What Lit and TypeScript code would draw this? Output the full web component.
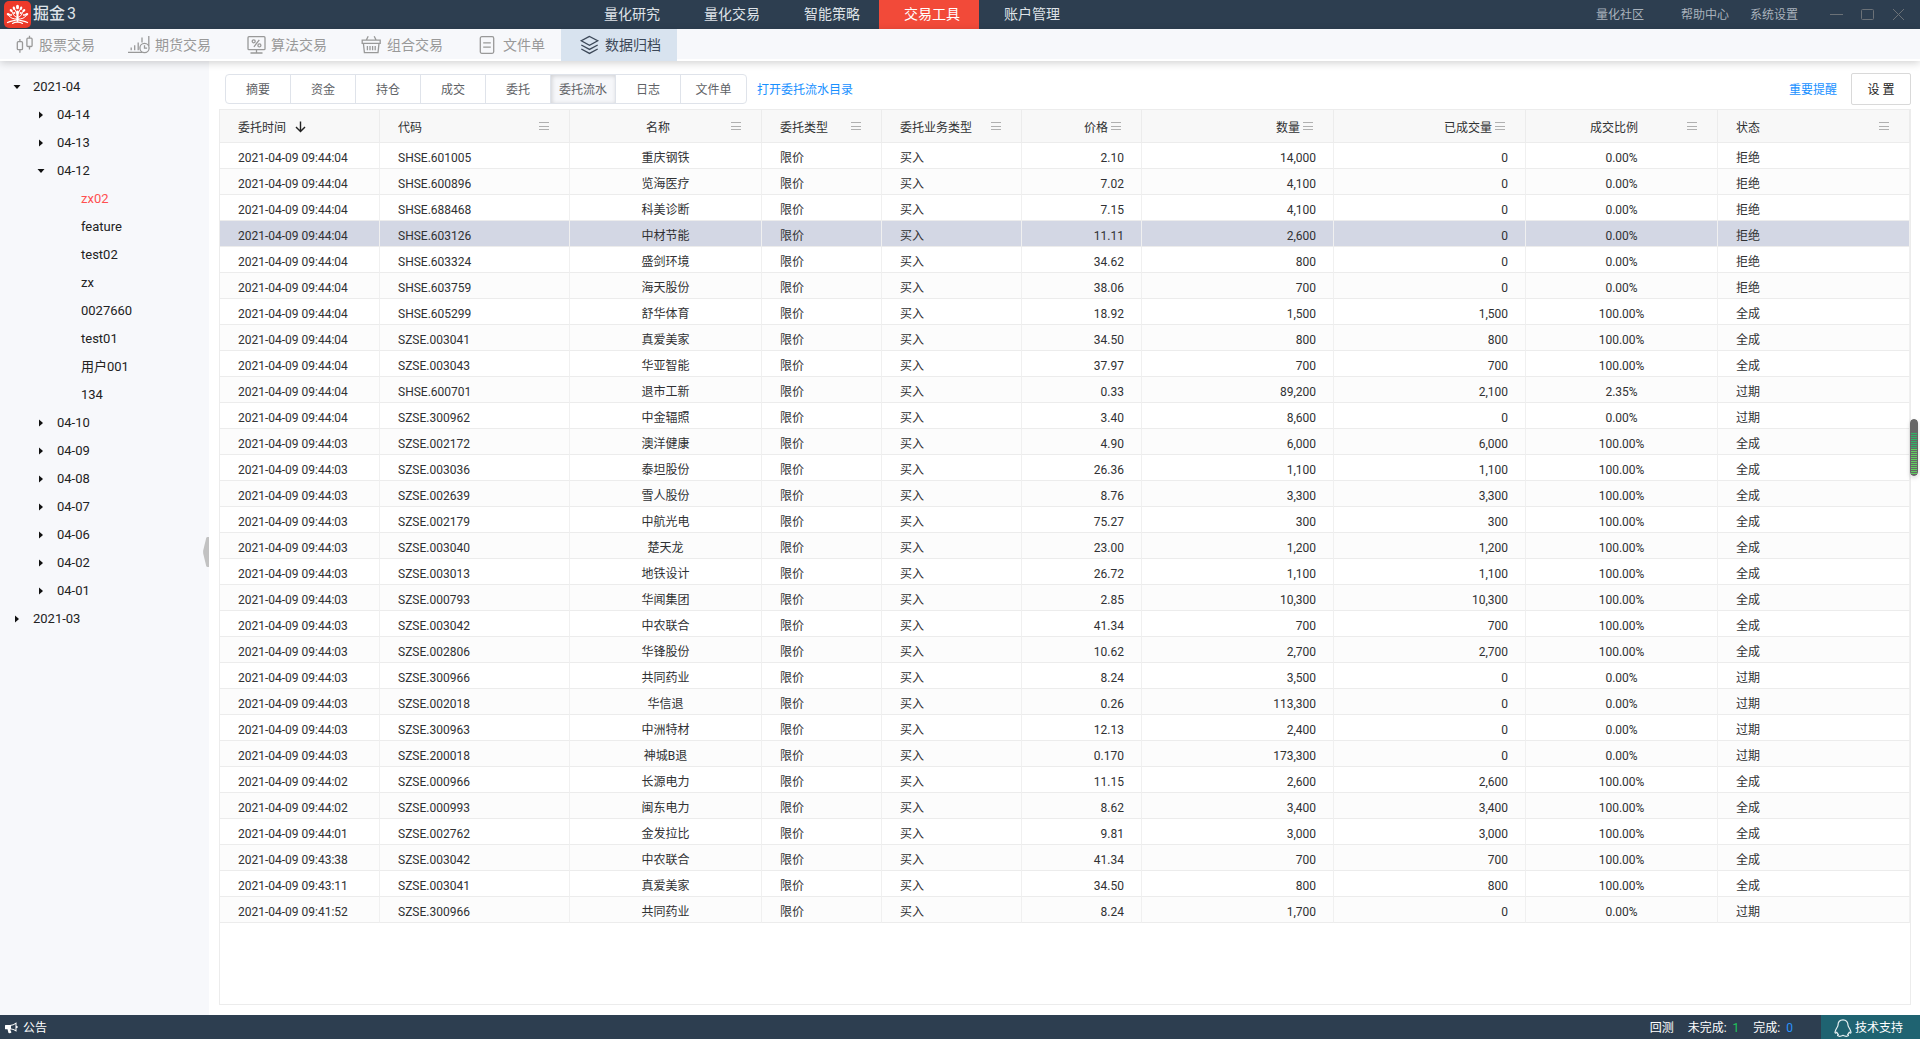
import { LitElement, html, svg, css, nothing } from "lit";
import { customElement, state } from "lit/decorators.js";
import { classMap } from "lit/directives/class-map.js";

type Align = "left" | "center" | "right";

interface Column {
  title: string;
  align: Align;
  size: string;
}

const COLUMNS: Column[] = [
  { title: "委托时间", align: "left", size: "w160" },
  { title: "代码", align: "left", size: "w190" },
  { title: "名称", align: "center", size: "" },
  { title: "委托类型", align: "left", size: "w120" },
  { title: "委托业务类型", align: "left", size: "w140" },
  { title: "价格", align: "right", size: "w120" },
  { title: "数量", align: "right", size: "" },
  { title: "已成交量", align: "right", size: "" },
  { title: "成交比例", align: "center", size: "" },
  { title: "状态", align: "left", size: "" },
];

// time | code | name | price | quantity | filled | ratio | status
const ORDERS = `
09:44:04|SHSE.601005|重庆钢铁|2.10|14,000|0|0.00%|拒绝
09:44:04|SHSE.600896|览海医疗|7.02|4,100|0|0.00%|拒绝
09:44:04|SHSE.688468|科美诊断|7.15|4,100|0|0.00%|拒绝
09:44:04|SHSE.603126|中材节能|11.11|2,600|0|0.00%|拒绝
09:44:04|SHSE.603324|盛剑环境|34.62|800|0|0.00%|拒绝
09:44:04|SHSE.603759|海天股份|38.06|700|0|0.00%|拒绝
09:44:04|SHSE.605299|舒华体育|18.92|1,500|1,500|100.00%|全成
09:44:04|SZSE.003041|真爱美家|34.50|800|800|100.00%|全成
09:44:04|SZSE.003043|华亚智能|37.97|700|700|100.00%|全成
09:44:04|SHSE.600701|退市工新|0.33|89,200|2,100|2.35%|过期
09:44:04|SZSE.300962|中金辐照|3.40|8,600|0|0.00%|过期
09:44:03|SZSE.002172|澳洋健康|4.90|6,000|6,000|100.00%|全成
09:44:03|SZSE.003036|泰坦股份|26.36|1,100|1,100|100.00%|全成
09:44:03|SZSE.002639|雪人股份|8.76|3,300|3,300|100.00%|全成
09:44:03|SZSE.002179|中航光电|75.27|300|300|100.00%|全成
09:44:03|SZSE.003040|楚天龙|23.00|1,200|1,200|100.00%|全成
09:44:03|SZSE.003013|地铁设计|26.72|1,100|1,100|100.00%|全成
09:44:03|SZSE.000793|华闻集团|2.85|10,300|10,300|100.00%|全成
09:44:03|SZSE.003042|中农联合|41.34|700|700|100.00%|全成
09:44:03|SZSE.002806|华锋股份|10.62|2,700|2,700|100.00%|全成
09:44:03|SZSE.300966|共同药业|8.24|3,500|0|0.00%|过期
09:44:03|SZSE.002018|华信退|0.26|113,300|0|0.00%|过期
09:44:03|SZSE.300963|中洲特材|12.13|2,400|0|0.00%|过期
09:44:03|SZSE.200018|神城B退|0.170|173,300|0|0.00%|过期
09:44:02|SZSE.000966|长源电力|11.15|2,600|2,600|100.00%|全成
09:44:02|SZSE.000993|闽东电力|8.62|3,400|3,400|100.00%|全成
09:44:01|SZSE.002762|金发拉比|9.81|3,000|3,000|100.00%|全成
09:43:38|SZSE.003042|中农联合|41.34|700|700|100.00%|全成
09:43:11|SZSE.003041|真爱美家|34.50|800|800|100.00%|全成
09:41:52|SZSE.300966|共同药业|8.24|1,700|0|0.00%|过期`
  .trim()
  .split("\n")
  .map((line) => {
    const [time, code, name, price, qty, filled, ratio, status] = line.split("|");
    return [`2021-04-09 ${time}`, code, name, "限价", "买入", price, qty, filled, ratio, status];
  });

interface TreeNode {
  label: string;
  open?: boolean;
  children?: TreeNode[];
  leaf?: boolean;
}

const closed = (label: string): TreeNode => ({ label });
const leaf = (label: string): TreeNode => ({ label, leaf: true });

const TREE: TreeNode[] = [
  {
    label: "2021-04",
    open: true,
    children: [
      closed("04-14"),
      closed("04-13"),
      {
        label: "04-12",
        open: true,
        children: ["zx02", "feature", "test02", "zx", "0027660", "test01", "用户001", "134"].map(leaf),
      },
      ...["04-10", "04-09", "04-08", "04-07", "04-06", "04-02", "04-01"].map(closed),
    ],
  },
  closed("2021-03"),
];

const toolIcon = (body: unknown) =>
  html`<svg class="tool-icon" width="20" height="20" viewBox="0 0 20 20" fill="none" stroke="currentColor" stroke-width="1.3" aria-hidden="true">${body}</svg>`;

const TOOLS = [
  {
    label: "股票交易",
    icon: svg`<rect x="3.3" y="6.7" width="5.2" height="8" rx="1"/><path d="M5.900 4v2.700M5.900 14.700v3"/><rect x="12.900" y="3.200" width="5.200" height="8.300" rx="1"/><path d="M15.500 .8v2.400M15.500 11.500v3"/>`,
  },
  {
    label: "期货交易",
    icon: svg`<path d="M-2 17.400h14M1.200 12.600v2.600M4.700 10.200v5M8.200 7.600v7.600M18.800 1v10"/><circle cx="14.500" cy="13" r="4.600"/><path d="M14.500 10.200v3h2.600M12 2.600v5"/>`,
  },
  {
    label: "算法交易",
    icon: svg`<rect x="2" y="1.700" width="17" height="13" rx="1"/><path d="M4.500 18h12M10.500 15v3M13.300 4.800l-5.400 7"/><circle cx="7.700" cy="6.300" r="1.500"/><circle cx="13.400" cy="10.400" r="1.500"/>`,
  },
  {
    label: "组合交易",
    icon: svg`<path d="M.2 5.200h18v3.200h-18zM1.400 8.400l1 9.200h13.600l1-9.200M4.200 5.200l2-4M14.200 5.200l-2-4M5.400 11v4.200M8 11v4.200M10.600 11v4.200M13.200 11v4.200"/>`,
  },
  {
    label: "文件单",
    icon: svg`<rect x="2.300" y="1.700" width="13.400" height="16.600" rx="1.500"/><path d="M5.200 7.800h7.600M5.200 12.200h7.600"/>`,
  },
  {
    label: "数据归档",
    icon: svg`<path d="M9.500 1.400L1.300 5.800 9.500 10.200l8.200-4.400zM1.300 10l8.200 4.400 8.200-4.400M1.300 14l8.200 4.400 8.200-4.400"/>`,
  },
];

const NAV = ["量化研究", "量化交易", "智能策略", "交易工具", "账户管理"];
const TABS = ["摘要", "资金", "持仓", "成交", "委托", "委托流水", "日志", "文件单"];

const logo = html`<svg class="logo" width="27" height="27" viewBox="0 0 27 27" aria-hidden="true">
  <rect width="27" height="27" rx="5" fill="#ee3a2a" />
  <g fill="none" stroke="#fff" stroke-linecap="round">
    <path d="M13.500 11v9" stroke-width="2" />
    <path d="M13.500 16.500C11 16 9 14 8.500 11.500M13.500 16.500C16 16 18 14 18.500 11.500M13 18C9 18.200 6.500 17 5 14.800M14 18C18 18.200 20.500 17 22 14.800M13.500 14L11.200 9M13.500 14L15.800 9" stroke-width="1" />
    <path d="M3.500 21.500C7 19.300 9.500 20.300 13.500 18.500C17.500 20.300 20 19.300 23.500 21.500M8.500 22.400C11 20.700 16 20.700 18.500 22.400" stroke-width="1.200" />
  </g>
  <g fill="#fff">
    <ellipse cx="13.500" cy="6" rx="1.500" ry="2.300" />
    <ellipse cx="10" cy="7.300" rx="1.200" ry="1.900" transform="rotate(-20 10 7.300)" />
    <ellipse cx="17" cy="7.300" rx="1.200" ry="1.900" transform="rotate(20 17 7.300)" />
    <ellipse cx="7.200" cy="9.600" rx="1.200" ry="1.900" transform="rotate(-40 7.200 9.600)" />
    <ellipse cx="19.800" cy="9.600" rx="1.200" ry="1.900" transform="rotate(40 19.800 9.600)" />
    <ellipse cx="4.400" cy="13.400" rx="1.200" ry="1.800" transform="rotate(-60 4.400 13.400)" />
    <ellipse cx="22.600" cy="13.400" rx="1.200" ry="1.800" transform="rotate(60 22.600 13.400)" />
    <circle cx="13.500" cy="10.800" r="1.300" />
    <circle cx="10.200" cy="12" r="1.100" />
    <circle cx="16.800" cy="12" r="1.100" />
    <circle cx="7" cy="14" r="1" />
    <circle cx="20" cy="14" r="1" />
  </g>
</svg>`;

@customElement("app-root")
export class AppRoot extends LitElement {
  @state() private nav = 3;
  @state() private tool = 5;
  @state() private tab = 5;
  @state() private account = "zx02";
  @state() private row = 3;

  static styles = css`
    :host {
      display: flex;
      flex-direction: column;
      min-height: 100vh;
      background: #fff;
      color: #303133;
      font: 12px/20px Roboto, "Noto Sans CJK SC", sans-serif;
    }
    * {
      box-sizing: border-box;
    }
    button {
      margin: 0;
      padding: 0;
      border: 0;
      background: none;
      color: inherit;
      font: inherit;
      cursor: pointer;
      white-space: nowrap;
    }
    a {
      text-decoration: none;
    }
    svg {
      display: block;
      flex: none;
    }
    .titlebar {
      display: grid;
      grid-template-columns: 579px auto 1fr;
      height: 29px;
      background: #2d3e50;
      color: #dfe3e8;
    }
    .brand {
      display: flex;
      align-items: center;
      gap: 2px;
      padding-left: 4px;
      padding-bottom: 1px;
      font-size: 16px;
    }
    .brand-name {
      font-weight: 500;
    }
    .nav {
      display: flex;
    }
    .nav-item {
      width: 100px;
      padding: 0 0 2px 25px;
      text-align: left;
      font-size: 14px;
    }
    .nav-item.active {
      background: #f24a39;
      color: #fff;
    }
    .links {
      display: flex;
      align-items: center;
      justify-content: flex-end;
      padding-right: 15px;
      color: #a9b2bc;
    }
    .link {
      color: inherit;
      margin-right: 21px;
    }
    .link.wide {
      margin-right: 37px;
    }
    .window-controls {
      display: flex;
      gap: 18px;
      padding-left: 11px;
      color: #6b7177;
    }
    .toolbar {
      display: flex;
      position: relative;
      z-index: 1;
      height: 32px;
      border-bottom: 2px solid #fff;
      background: #f7f8fb;
      box-shadow: 0 2px 8px rgba(0, 0, 0, 0.18);
      color: #999;
    }
    .tool {
      display: flex;
      align-items: center;
      gap: 5px;
      height: 32px;
      padding: 0 16px 0 19px;
      font-size: 14px;
    }
    .tool:first-child {
      padding-left: 14px;
    }
    .tool-icon {
      overflow: visible;
    }
    .tool.active {
      background: #d8e3ef;
      color: #3c4858;
    }
    .body {
      display: flex;
      flex: 1;
    }
    .sidebar {
      display: flex;
      position: relative;
      flex: none;
      width: 209px;
      padding: 12px 0;
      background: #f7f8fb;
      color: #222;
      font-size: 13px;
    }
    .tree,
    .branch {
      margin: 0;
      padding: 0;
      list-style: none;
    }
    .tree {
      flex: 1;
      padding-left: 9px;
    }
    .branch {
      padding-left: 24px;
    }
    .node {
      display: flex;
      align-items: center;
      gap: 8px;
      width: 100%;
      height: 28px;
    }
    .node.selected {
      color: #ff5050;
    }
    .caret {
      width: 16px;
      height: 16px;
      fill: #111;
    }
    .collapse {
      position: absolute;
      right: 0;
      top: 476px;
      width: 6px;
      height: 30px;
    }
    .main {
      display: flex;
      flex: 1;
      flex-direction: column;
      min-width: 0;
      padding: 12px 9px 10px 10px;
    }
    .actions {
      display: flex;
      align-items: center;
      height: 32px;
      margin-bottom: 4px;
      padding-left: 6px;
    }
    .tabs {
      display: flex;
      height: 30px;
      border: 1px solid #dfe3ea;
      border-radius: 4px;
      overflow: hidden;
      color: #606266;
    }
    .tab {
      width: 65px;
      padding-top: 1px;
      border-right: 1px solid #dfe3ea;
    }
    .tab.active {
      background: #f6f7fa;
      box-shadow: inset 1px 1px 4px rgba(0, 0, 0, 0.16);
    }
    .tab:last-child {
      border-right: 0;
    }
    .blue {
      color: #1890ff;
      margin-left: 10px;
      padding-top: 2px;
    }
    .notice {
      margin: 0 14px 0 auto;
    }
    .settings {
      width: 60px;
      height: 32px;
      padding-top: 2px;
      border: 1px solid #d9d9d9;
      border-radius: 2px;
      background: #fff;
      color: #222;
    }
    .grid {
      position: relative;
      flex: 1;
      border: 1px solid #ececec;
    }
    .orders {
      width: 100%;
      table-layout: fixed;
      border-collapse: separate;
      border-spacing: 0;
    }
    .w120 {
      width: 120px;
    }
    .w140 {
      width: 140px;
    }
    .w160 {
      width: 160px;
    }
    .w190 {
      width: 190px;
    }
    .head {
      height: 33px;
      padding: 2px 20px 0 18px;
      border-right: 1px solid #ececec;
      border-bottom: 1px solid #ececec;
      background: #f8f8f8;
      color: #303133;
      font-weight: 400;
    }
    .head-inner {
      display: flex;
      align-items: center;
      gap: 3px;
    }
    .head-title {
      flex: 1;
      padding-top: 2px;
      white-space: nowrap;
    }
    .head-title.fit {
      flex: none;
    }
    .sort {
      margin-left: 6px;
    }
    .menu {
      margin-bottom: 2px;
    }
    .cell {
      height: 26px;
      padding: 5px 17px 0 18px;
      border-right: 1px solid #f0f0f0;
      border-bottom: 1px solid #ececec;
      white-space: nowrap;
    }
    .left {
      text-align: left;
    }
    .center {
      text-align: center;
    }
    .cell.center {
      padding-left: 17px;
    }
    .right {
      text-align: right;
    }
    .row:nth-child(even) {
      background: #fcfcfc;
    }
    .row.selected {
      background: #d3d7e4;
    }
    .meter {
      position: absolute;
      right: -8px;
      top: 309px;
      width: 8px;
      height: 57px;
      box-shadow: 0 2px 4px rgba(0, 0, 0, 0.15);
      border-radius: 4px;
    }
    .statusbar {
      display: flex;
      align-items: center;
      height: 24px;
      background: #2d3e50;
      color: #fff;
    }
    .announce {
      display: flex;
      align-items: center;
      gap: 5px;
      margin-right: auto;
      padding: 2px 0 0 5px;
    }
    .stat {
      margin-right: 14px;
      padding-top: 2px;
    }
    .green {
      color: #1fc75b;
      margin-left: 3px;
    }
    .azure {
      color: #2a94ff;
      margin-left: 3px;
    }
    .support {
      display: flex;
      align-items: center;
      gap: 3px;
      width: 99px;
      height: 24px;
      margin-left: 14px;
      padding: 2px 0 0 13px;
      background: #1f6371;
    }
  `;

  private renderNode(node: TreeNode): unknown {
    const caret = node.open ? "M4.500 6h7l-3.500 4z" : "M6 4.500v7l4-3.500z";
    return html`<li>
      <button
        class=${classMap({ node: true, selected: node.label === this.account })}
        @click=${() => node.leaf && (this.account = node.label)}
      >
        <svg class="caret" viewBox="0 0 16 16" aria-hidden="true">${node.leaf ? nothing : svg`<path d=${caret} />`}</svg>
        ${node.label}
      </button>
      ${node.children ? html`<ul class="branch">${node.children.map((c) => this.renderNode(c))}</ul>` : nothing}
    </li>`;
  }

  private renderHead(col: Column, index: number) {
    const fit = index === 0;
    return html`<th class="head ${col.size}" scope="col">
      <div class="head-inner">
        <span class="head-title ${col.align} ${fit ? "fit" : ""}">${col.title}</span>
        ${fit
          ? html`<svg class="sort" width="11" height="12" viewBox="0 0 11 12" fill="none" stroke="#222" stroke-width="1.400" aria-hidden="true"><path d="M5.500 .5v10M1 6l4.500 4.600L10 6" /></svg>`
          : html`<svg class="menu" width="10" height="12" viewBox="0 0 10 12" stroke="#b0b0b0" aria-hidden="true"><path d="M0 2.500h10M0 6.500h10M0 9.500h10" /></svg>`}
      </div>
    </th>`;
  }

  render() {
    return html`
      <header class="titlebar">
        <div class="brand">${logo}<span class="brand-name">掘金</span><span>3</span></div>
        <nav class="nav">
          ${NAV.map(
            (label, i) =>
              html`<button class=${classMap({ "nav-item": true, active: i === this.nav })} @click=${() => (this.nav = i)}>${label}</button>`
          )}
        </nav>
        <div class="links">
          <a class="link wide" href="#">量化社区</a>
          <a class="link" href="#">帮助中心</a>
          <a class="link" href="#">系统设置</a>
          <div class="window-controls">
            <button aria-label="最小化"><svg width="13" height="13" viewBox="0 0 13 13" stroke="currentColor"><path d="M0 6.500h13" /></svg></button>
            <button aria-label="最大化"><svg width="13" height="13" viewBox="0 0 13 13" fill="none" stroke="currentColor"><rect x=".5" y="1.500" width="12" height="10" rx="1" /></svg></button>
            <button aria-label="关闭"><svg width="13" height="13" viewBox="0 0 13 13" stroke="currentColor"><path d="M1 1l11 11M12 1L1 12" /></svg></button>
          </div>
        </div>
      </header>
      <nav class="toolbar">
        ${TOOLS.map(
          (t, i) =>
            html`<button class=${classMap({ tool: true, active: i === this.tool })} @click=${() => (this.tool = i)}>${toolIcon(t.icon)}<span>${t.label}</span></button>`
        )}
      </nav>
      <div class="body">
        <aside class="sidebar">
          <ul class="tree">${TREE.map((n) => this.renderNode(n))}</ul>
          <button class="collapse" aria-label="收起">
            <svg width="6" height="30" viewBox="0 0 6 30" aria-hidden="true"><path d="M6 0H4.500Q3.500 0 3.200 1L.2 13.500Q0 15 .2 16.500L3.200 29Q3.500 30 4.500 30H6z" fill="#c2c2c2" /></svg>
          </button>
        </aside>
        <main class="main">
          <div class="actions">
            <div class="tabs">
              ${TABS.map(
                (label, i) =>
                  html`<button class=${classMap({ tab: true, active: i === this.tab })} @click=${() => (this.tab = i)}>${label}</button>`
              )}
            </div>
            <a class="blue" href="#">打开委托流水目录</a>
            <a class="blue notice" href="#">重要提醒</a>
            <button class="settings">设 置</button>
          </div>
          <div class="grid">
            <table class="orders">
              <thead>
                <tr>${COLUMNS.map((c, i) => this.renderHead(c, i))}</tr>
              </thead>
              <tbody>
                ${ORDERS.map(
                  (cells, i) => html`<tr class=${classMap({ row: true, selected: i === this.row })} @click=${() => (this.row = i)}>
                    ${cells.map((value, c) => html`<td class="cell ${COLUMNS[c].align}">${value}</td>`)}
                  </tr>`
                )}
              </tbody>
            </table>
            <svg class="meter" viewBox="0 0 8 57" aria-hidden="true">
              <rect width="8" height="57" rx="4" fill="#666" />
              ${Array.from({ length: 21 }, (_, i) => svg`<path d="M1 ${14.5 + i * 2}h6" stroke=${i < 8 ? "#2fb565" : "#5fd05f"} />`)}
            </svg>
          </div>
        </main>
      </div>
      <footer class="statusbar">
        <button class="announce">
          <svg width="13" height="12" viewBox="0 0 13 12" fill="#fff" aria-hidden="true"><path d="M0 3.500Q0 3 .6 3H5Q8.500 2.800 11.500 .3V9.800Q8.500 7.500 5.500 7.300Q5 8.500 6.500 10.300Q5.500 11.500 3.500 11L2.500 7.300H.6Q0 7.300 0 6.800zM6 3.800V6.500Q8.500 6.800 10.500 8.100V2.100Q8.500 3.500 6 3.800zM11.500 4Q12.900 4 12.900 5T11.500 6.100z" fill-rule="evenodd" /></svg>
          <span>公告</span>
        </button>
        <span class="stat">回测</span>
        <span class="stat">未完成: <span class="green">1</span></span>
        <span class="stat">完成: <span class="azure">0</span></span>
        <button class="support">
          <svg width="18" height="18" viewBox="0 0 18 18" fill="none" stroke="#e6f0f2" stroke-width="1.200" stroke-linejoin="round" aria-hidden="true"><path d="M9 .8C5.800 .8 4 3 4 6.200C4 8 1.200 10.300 1 13.200C1 14.600 2 14.200 2.800 13.200C3.100 14.300 3.700 15 4.400 15.500C2.800 16.300 3.600 17.300 5.800 17.300C7.500 17.300 8.200 16.800 9 16.400C9.800 16.800 10.500 17.300 12.200 17.300C14.400 17.300 15.200 16.300 13.600 15.500C14.300 15 14.900 14.300 15.200 13.200C16 14.200 17 14.600 17 13.200C16.800 10.300 14 8 14 6.200C14 3 12.200 .8 9 .8z" /></svg>
          <span>技术支持</span>
        </button>
      </footer>
    `;
  }
}
